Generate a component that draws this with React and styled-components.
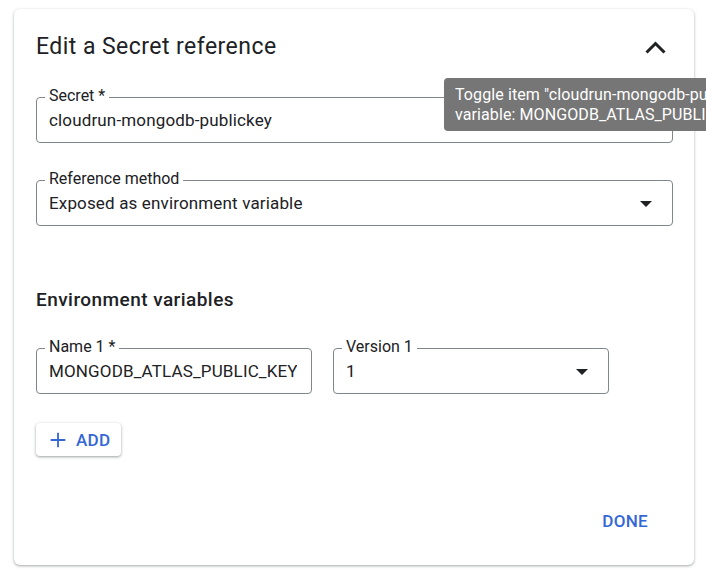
import React from "react";
import styled, { createGlobalStyle } from "styled-components";

const GlobalStyle = createGlobalStyle`
  body {
    margin: 0;
    background: #fff;
    font-family: Roboto, "Liberation Sans", sans-serif;
    color: #202124;
    overflow: hidden;
  }
`;

const Page = styled.div`
  position: relative;
  width: 706px;
  height: 577px;
  padding: 9px 0 0 14px;
  box-sizing: border-box;
  overflow: hidden;
`;

// Card that holds the whole form
const Card = styled.div`
  width: 680px;
  background: #fff;
  border-radius: 6px;
  box-shadow: 0 1px 2px rgba(60, 64, 67, 0.3), 0 1px 3px 1px rgba(60, 64, 67, 0.12);
  padding: 24px 22px 26px 22px;
  box-sizing: border-box;
  display: flex;
  flex-direction: column;
`;

const Header = styled.div`
  display: flex;
  align-items: center;
  justify-content: space-between;
  height: 28px;
  margin-bottom: 36px;
`;

const Title = styled.h1`
  margin: 0;
  font-size: 23px;
  font-weight: 400;
  letter-spacing: 0.45px;
  line-height: 28px;
  color: #202124;
`;

const IconButton = styled.button`
  border: none;
  background: none;
  padding: 0;
  width: 24px;
  height: 24px;
  margin-right: 5px;
  display: flex;
  align-items: center;
  justify-content: center;
  color: #202124;
`;

const Field = styled.div`
  position: relative;
  width: ${(p) => p.width || "637px"};
  height: 46px;
  border: 1px solid #80868b;
  border-radius: 4px;
  box-sizing: border-box;
  display: flex;
  align-items: center;
  justify-content: space-between;
  padding: 0 14px 0 12px;
  margin-bottom: ${(p) => p.gap || "0"};
`;

const FieldLabel = styled.span`
  position: absolute;
  left: 8px;
  top: -12px;
  padding: 0 4px;
  background: #fff;
  font-size: 16px;
  line-height: 19px;
  color: #202124;
`;

const FieldValue = styled.span`
  font-size: 17px;
  letter-spacing: 0.15px;
  line-height: 20px;
  color: #202124;
  white-space: nowrap;
  overflow: hidden;
`;

const SectionTitle = styled.h2`
  margin: 62px 0 36px 0;
  font-size: 19px;
  font-weight: 500;
  letter-spacing: 0.45px;
  line-height: 24px;
  color: #202124;
`;

const Row = styled.div`
  display: flex;
  gap: 21px;
  margin-bottom: 29px;
`;

const AddButton = styled.button`
  align-self: flex-start;
  display: flex;
  align-items: center;
  gap: 7px;
  height: 33px;
  padding: 0 11px 0 11px;
  border: none;
  border-radius: 4px;
  background: #fff;
  box-shadow: 0 1px 2px rgba(60, 64, 67, 0.3), 0 1px 3px 1px rgba(60, 64, 67, 0.15);
  color: #3367d6;
  font-family: Roboto, "Liberation Sans", sans-serif;
  font-size: 17px;
  font-weight: 500;
  letter-spacing: 0.3px;
`;

const Footer = styled.div`
  display: flex;
  justify-content: flex-end;
  margin-top: 47px;
`;

const TextButton = styled.button`
  height: 36px;
  padding: 0 24px 0 8px;
  border: none;
  background: none;
  color: #3367d6;
  font-family: Roboto, "Liberation Sans", sans-serif;
  font-size: 17px;
  font-weight: 500;
  letter-spacing: 0.3px;
`;

// Tooltip hovering over the secret field, runs off the right edge
const Tooltip = styled.div`
  position: absolute;
  left: 444px;
  top: 78px;
  background: #767676;
  color: #fff;
  border-radius: 4px;
  padding: 7px 11px 6px 11px;
  font-size: 16px;
  letter-spacing: 0.1px;
  line-height: 20px;
  white-space: nowrap;
`;

const ChevronUp = () => (
  <svg width="21" height="13" viewBox="0 0 21 13" fill="none">
    <polyline
      points="1.5,11.5 10.5,2.5 19.5,11.5"
      stroke="currentColor"
      strokeWidth="3"
    />
  </svg>
);

const DropArrow = () => (
  <svg width="24" height="24" viewBox="0 0 24 24" fill="#202124">
    <path d="M6 10l6 6 6-6z" />
  </svg>
);

const Plus = () => (
  <svg width="22" height="22" viewBox="0 0 24 24" fill="#3367d6">
    <path d="M20 13h-7v7h-2v-7H4v-2h7V4h2v7h7v2z" />
  </svg>
);

function App() {
  return (
    <>
      <GlobalStyle />
      <Page>
        <Card>
          <Header>
            <Title>Edit a Secret reference</Title>
            <IconButton>
              <ChevronUp />
            </IconButton>
          </Header>

          <Field gap="37px">
            <FieldLabel>Secret *</FieldLabel>
            <FieldValue>cloudrun-mongodb-publickey</FieldValue>
          </Field>

          <Field>
            <FieldLabel>Reference method</FieldLabel>
            <FieldValue>Exposed as environment variable</FieldValue>
            <DropArrow />
          </Field>

          <SectionTitle>Environment variables</SectionTitle>

          <Row>
            <Field width="276px">
              <FieldLabel>Name 1 *</FieldLabel>
              <FieldValue>MONGODB_ATLAS_PUBLIC_KEY</FieldValue>
            </Field>
            <Field width="276px">
              <FieldLabel>Version 1</FieldLabel>
              <FieldValue>1</FieldValue>
              <DropArrow />
            </Field>
          </Row>

          <AddButton>
            <Plus />
            ADD
          </AddButton>

          <Footer>
            <TextButton>DONE</TextButton>
          </Footer>
        </Card>

        <Tooltip>
          Toggle item "cloudrun-mongodb-publickey" exposed as environment
          <br />
          variable: MONGODB_ATLAS_PUBLIC_KEY
        </Tooltip>
      </Page>
    </>
  );
}

export default App;
